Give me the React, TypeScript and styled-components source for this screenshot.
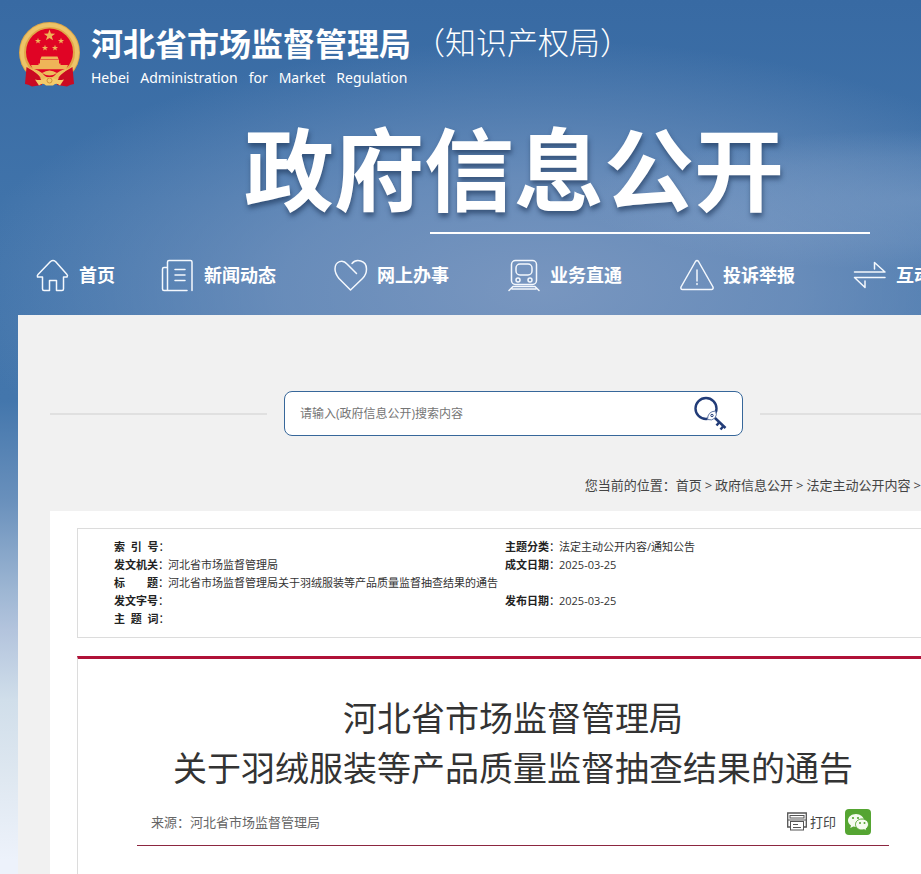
import React from "react";
import styled, { createGlobalStyle } from "styled-components";

const GlobalStyle = createGlobalStyle`
  *, *::before, *::after { box-sizing: border-box; }
  body {
    margin: 0;
    font-family: "Open Sans", "Noto Sans CJK SC", sans-serif;
    color: #333;
    background: #eef3fb;
  }
  a { color: inherit; text-decoration: none; }
`;

const Page = styled.div`
  min-height: 100vh;
  padding-left: 18px;
  overflow: hidden;
  display: flex;
  flex-direction: column;
  background:
    radial-gradient(ellipse 340px 70px at 100% 200px, rgba(150, 175, 210, 0.35), rgba(150, 175, 210, 0.2) 60%, rgba(150, 175, 210, 0) 100%) no-repeat 0 0 / 100% 315px,
    radial-gradient(ellipse 580px 250px at 540px 290px, rgba(130, 156, 195, 0.85), rgba(120, 150, 192, 0.7) 45%, rgba(80, 125, 178, 0) 100%) no-repeat 0 0 / 100% 400px,
    linear-gradient(180deg, #386aa3 0, #4073aa 200px, #4376ac 400px, #6990bc 500px, #9db6d3 590px, #b3c4dd 630px, #d0deea 700px, #dfe8f1 780px, #edf2fb 860px);
`;

const Brand = styled.header`
  display: flex;
  align-items: flex-start;
  padding-top: 20px;
  height: 124px;
`;

const BrandText = styled.a`
  margin-left: 11px;
  color: #fff;
  white-space: pre;
`;

const BrandName = styled.span`
  display: block;
  font-size: 32px;
  font-weight: 700;
  line-height: 48px;
`;

const BrandEnglish = styled.span`
  display: block;
  font-family: "Noto Sans", "Open Sans", sans-serif;
  font-size: 14px;
  line-height: 20px;
`;

const BrandAlias = styled.span`
  margin-left: 3px;
  color: #fff;
  font-size: 31px;
  font-weight: 300;
  line-height: 44px;
  white-space: nowrap;
`;

const Banner = styled.h1`
  margin: 0 0 0 226px;
  color: #fff;
  font-size: 90px;
  font-weight: 700;
  line-height: 90px;
  white-space: nowrap;
  text-shadow: 1px 4px 5px rgba(30, 55, 90, 0.65);
`;

const BannerLine = styled.div`
  width: 440px;
  height: 2px;
  margin: 18px 0 0 412px;
  background: #fff;
`;

const Nav = styled.nav`
  display: flex;
  align-items: center;
  height: 81px;
  padding-left: 18px;
`;

const NavLink = styled.a<{ $short?: boolean }>`
  flex: 0 0 ${(p) => (p.$short ? 125 : 173)}px;
  display: flex;
  align-items: center;
  gap: 9px;
  color: #fff;
  font-size: 18px;
  font-weight: 700;
  line-height: 24px;
  white-space: nowrap;
`;

const NavIcon = styled.svg`
  flex: none;
  width: 34px;
  height: 34px;
  fill: none;
  stroke: #f4f8fd;
  stroke-width: 1.5;
  stroke-linejoin: round;
  stroke-linecap: round;
`;

const Panel = styled.main`
  flex: 1;
  display: flex;
  flex-direction: column;
  padding-left: 32px;
  background: #f1f1f1;
`;

const SearchRow = styled.div`
  display: flex;
  align-items: center;
  gap: 17px;
  padding-top: 76px;
`;

const Rule = styled.div<{ $grow?: boolean }>`
  flex: ${(p) => (p.$grow ? "1 0 20px" : "0 1 217px")};
  height: 2px;
  background: #e0e0e0;
`;

const SearchBox = styled.form`
  flex: 0 0 459px;
  display: flex;
  align-items: center;
  height: 45px;
  padding: 0 14px 0 15px;
  border: 1px solid #37679a;
  border-radius: 8px;
  background: #fff;
`;

const SearchInput = styled.input`
  flex: 1;
  min-width: 0;
  padding: 0;
  border: 0;
  outline: 0;
  background: transparent;
  font-family: inherit;
  font-size: 12px;
  color: #333;
  &::placeholder { color: #757575; opacity: 1; }
`;

const IconButton = styled.button`
  display: flex;
  align-items: center;
  gap: 3px;
  padding: 0;
  border: 0;
  background: transparent;
  color: #444;
  font-family: inherit;
  font-size: 13px;
  line-height: 20px;
  cursor: pointer;
`;

const Crumbs = styled.nav`
  display: flex;
  justify-content: flex-end;
  gap: 3px;
  padding: 39px 0 16px;
  font-size: 13px;
  line-height: 20px;
  color: #444;
  white-space: nowrap;
`;

const Card = styled.div`
  flex: 1;
  display: flex;
  flex-direction: column;
  padding: 17px 0 0 27px;
  background: #fff;
`;

const InfoBox = styled.div`
  padding: 9px 0 9px 36px;
  border: 1px solid #dcdcdc;
  border-right: 0;
`;

const InfoTable = styled.table`
  width: 100%;
  table-layout: fixed;
  border-collapse: collapse;
  font-size: 11px;
  line-height: 18px;
  white-space: pre;
  th, td { height: 18px; padding: 0; text-align: left; }
  th { color: #222; }
  th i { font-style: normal; font-weight: 400; }
`;

const Article = styled.article`
  flex: 1;
  min-height: 218px;
  margin-top: 18px;
  padding: 34px 32px 0 59px;
  border-left: 1px solid #dcdcdc;
  border-top: 3px solid #b01238;
`;

const Title = styled.h2`
  margin: 0;
  font-size: 34px;
  font-weight: 400;
  line-height: 50px;
  text-align: center;
  color: #333;
  white-space: nowrap;
`;

const Meta = styled.div`
  display: flex;
  align-items: center;
  height: 53px;
  padding: 5px 18px 0 14px;
  border-bottom: 1px solid #8c2740;
  font-size: 13px;
  line-height: 20px;
  color: #666;
`;

const Source = styled.span`
  flex: 1;
`;

const Tools = styled.div`
  display: flex;
  align-items: center;
  gap: 9px;
`;

const star = (cx: number, cy: number, r: number) =>
  Array.from({ length: 10 }, (_, i) => {
    const a = (Math.PI / 5) * i - Math.PI / 2;
    const d = i % 2 ? r * 0.4 : r;
    return `${(cx + d * Math.cos(a)).toFixed(2)},${(cy + d * Math.sin(a)).toFixed(2)}`;
  }).join(" ");

const Emblem = () => (
  <svg width="62" height="68" viewBox="0 0 62 68" aria-label="国徽">
    <circle cx="31.500" cy="32.500" r="30.500" fill="#e0a848" />
    <circle cx="31.500" cy="32.500" r="27.500" fill="none" stroke="#edc468" strokeWidth="4" />
    <circle cx="31.500" cy="32" r="23.500" fill="#e00425" />
    <g fill="#efb458">
      <polygon points={star(31.5, 15.5, 6)} />
      <polygon points={star(20, 21, 3.2)} />
      <polygon points={star(43, 21, 3.2)} />
      <polygon points={star(27, 28, 3.2)} />
      <polygon points={star(37, 28, 3.2)} />
      <path d="M23.500 36.500h16l1 2.500h-18z M22 39.500h19v4H22z M20.500 43.500h22v1.500h-22z M13 45h37l-2 4.500H15z" />
    </g>
    <path d="M12 49.500h39l-5 8H17z" fill="#e00425" />
    <path d="M9 48 Q17 48 24 53 Q31.500 48 39 53 Q46 48 54 48 Q45 52 40 58 Q31.500 63 23 58 Q18 52 9 48Z" fill="#edbd5c" />
    <path d="M24 53 Q31.500 58 39 53 L36 56 Q31.500 59 27 56Z" fill="#e00425" />
    <path d="M8.500 47 Q16 51 20 55 Q25 61 24 65 L14 66.500 Q10 64 7 64Z M54.500 47 Q47 51 43 55 Q38 61 39 65 L49 66.500 Q53 64 56 64Z" fill="#ca0a22" />
    <path d="M17 59.500 Q24 61 27 58.500 Q31.500 55.500 36 58.500 Q39 61 46 59.500 L42 65.500 Q38 62 35 65.500 H28 Q25 62 21 65.500Z" fill="#f5cb69" />
    <circle cx="31.500" cy="60.500" r="2.500" fill="none" stroke="#cf9238" />
  </svg>
);

const SearchKey = () => (
  <svg width="34" height="36" viewBox="0 0 34 36" fill="none" stroke="#223c78">
    <circle cx="12" cy="12.500" r="10.500" strokeWidth="2.400" />
    <path d="M13.500 23.500 Q13.500 15.500 21.500 15 Q23.500 19 21 22 Q18 25 13.500 23.500Z" fill="#fff" stroke="#6277a4" />
    <circle cx="18" cy="19.500" r="1.200" />
    <path d="M21 22 L31.500 32" strokeWidth="2.500" />
    <path d="M25.500 26 L22.500 29.500 M29.500 30 L26.500 33.500" strokeWidth="2.500" />
  </svg>
);

const Printer = () => (
  <svg width="20" height="19" viewBox="0 0 20 19" fill="none" stroke="#555">
    <path d="M3 15H.7V1H19.300V15H17" strokeWidth="1.300" />
    <rect x="3" y="3.500" width="14" height="2.500" />
    <path d="M1 8h18" />
    <rect x="3.500" y="9.500" width="13" height="8.500" fill="#fff" />
    <path d="M6 12.500h5M6 15.500h8" />
  </svg>
);

const WeChat = () => (
  <svg width="26" height="26" viewBox="0 0 26 26">
    <rect width="26" height="26" rx="4" fill="#55a532" />
    <path d="M11 5C6.500 5 3 7.900 3 11.500c0 2.100 1.200 3.800 3 5L5.300 19l3-1.500c.9.300 1.800.4 2.700.4C15.500 18 19 15 19 11.500S15.500 5 11 5Z" fill="#f5fbf0" />
    <path d="M17 10c-3.600 0-6.500 2.400-6.500 5.400S13.400 21 17 21c.8 0 1.500-.1 2.200-.3l2.400 1.200-.6-2c1.500-1 2.500-2.600 2.500-4.500 0-3-2.900-5.400-6.500-5.400Z" fill="#f5fbf0" stroke="#55a532" />
    <g fill="#55a532">
      <circle cx="8" cy="9" r="1.100" /><circle cx="13" cy="9" r="1.100" />
      <circle cx="15" cy="14" r="1" /><circle cx="19.500" cy="14" r="1" />
    </g>
  </svg>
);

const NAV = [
  {
    label: "首页",
    icon: <path d="M1.500 19 Q1 17.500 2 16.500 L14.500 3.500 Q17 1.500 19.500 3.500 L31 16.500 Q32 17.500 31 19 H27.500 V31 Q27.500 32.500 26 32.500 H20.500 V22.500 H13.500 V32.500 H8 Q6.500 32.500 6.500 31 V19Z" />,
  },
  {
    label: "新闻动态",
    icon: <path d="M26 32.500H3Q1.500 32.500 1.500 31V11Q1.500 9.500 3 9.500H6.500M6.500 26V4Q6.500 2.500 8 2.500H29.500Q31 2.500 31 4V32.500M6.500 26V32M14 11.500h10M14 17h10M14 22.500h10" />,
  },
  {
    label: "网上办事",
    icon: <path d="M22.500 15.500 L13 6 C9 1 1 3 1 11 C1 15 3 18 5 20.500 L16.500 32 L28.500 20.500 C31 18 32.500 15 32.500 11 C32.500 2 22 .5 18 5.500" />,
  },
  {
    label: "业务直通",
    icon: (
      <>
        <rect x="4.500" y="2.500" width="25" height="24" rx="4" />
        <rect x="9" y="6" width="16" height="11" rx="4" />
        <circle cx="11" cy="22" r="2" /><circle cx="23" cy="22" r="2" />
        <path d="M6 28.500h22M2 32.500l4-4M32 32.500l-4-4M5 31h24" />
      </>
    ),
  },
  {
    label: "投诉举报",
    icon: <path d="M15.500 3.500Q17 1.500 18.500 3.500L33 29Q33.500 31.500 31.500 31.500H2.500Q.5 31.500 1 29ZM17 12v11M17 25.500v1" />,
  },
  {
    label: "互动",
    icon: <path d="M1.500 14H32L21.500 4.500V11M32 19.500H1.500L12 29.500V23" />,
  },
];

const INFO = [
  ["索  引  号", "", "主题分类", "法定主动公开内容/通知公告"],
  ["发文机关", "河北省市场监督管理局", "成文日期", "2025-03-25"],
  ["标　　题", "河北省市场监督管理局关于羽绒服装等产品质量监督抽查结果的通告", "", ""],
  ["发文字号", "", "发布日期", "2025-03-25"],
  ["主  题  词", "", "", ""],
];

export default function App() {
  return (
    <>
      <GlobalStyle />
      <Page>
        <Brand>
          <Emblem />
          <BrandText href="#">
            <BrandName>河北省市场监督管理局</BrandName>
            <BrandEnglish>{"Hebei   Administration   for   Market   Regulation"}</BrandEnglish>
          </BrandText>
          <BrandAlias>（知识产权局）</BrandAlias>
        </Brand>
        <Banner>政府信息公开</Banner>
        <BannerLine />
        <Nav>
          {NAV.map((item, i) => (
            <NavLink key={item.label} href="#" $short={i === 0}>
              <NavIcon viewBox="0 0 34 34">{item.icon}</NavIcon>
              {item.label}
            </NavLink>
          ))}
        </Nav>
        <Panel>
          <SearchRow>
            <Rule />
            <SearchBox onSubmit={(e) => e.preventDefault()}>
              <SearchInput aria-label="搜索" placeholder="请输入(政府信息公开)搜索内容" />
              <IconButton type="submit" aria-label="搜索"><SearchKey /></IconButton>
            </SearchBox>
            <Rule $grow />
          </SearchRow>
          <Crumbs>
            <span>您当前的位置：<a href="#">首页</a></span>
            <span>&gt;</span>
            <a href="#">政府信息公开</a>
            <span>&gt;</span>
            <a href="#">法定主动公开内容</a>
            <span>&gt;</span>
          </Crumbs>
          <Card>
            <InfoBox>
              <InfoTable>
                <colgroup>
                  <col width="54" /><col width="337" /><col width="54" /><col />
                </colgroup>
                <tbody>
                  {INFO.map(([a, b, c, d]) => (
                    <tr key={a}>
                      <th scope="row">{a}<i>：</i></th>
                      <td>{b}</td>
                      {c ? <th scope="row">{c}<i>：</i></th> : <td />}
                      <td>{d}</td>
                    </tr>
                  ))}
                </tbody>
              </InfoTable>
            </InfoBox>
            <Article>
              <Title>河北省市场监督管理局<br />关于羽绒服装等产品质量监督抽查结果的通告</Title>
              <Meta>
                <Source>来源：河北省市场监督管理局</Source>
                <Tools>
                  <IconButton type="button"><Printer />打印</IconButton>
                  <IconButton type="button" aria-label="微信"><WeChat /></IconButton>
                </Tools>
              </Meta>
            </Article>
          </Card>
        </Panel>
      </Page>
    </>
  );
}
